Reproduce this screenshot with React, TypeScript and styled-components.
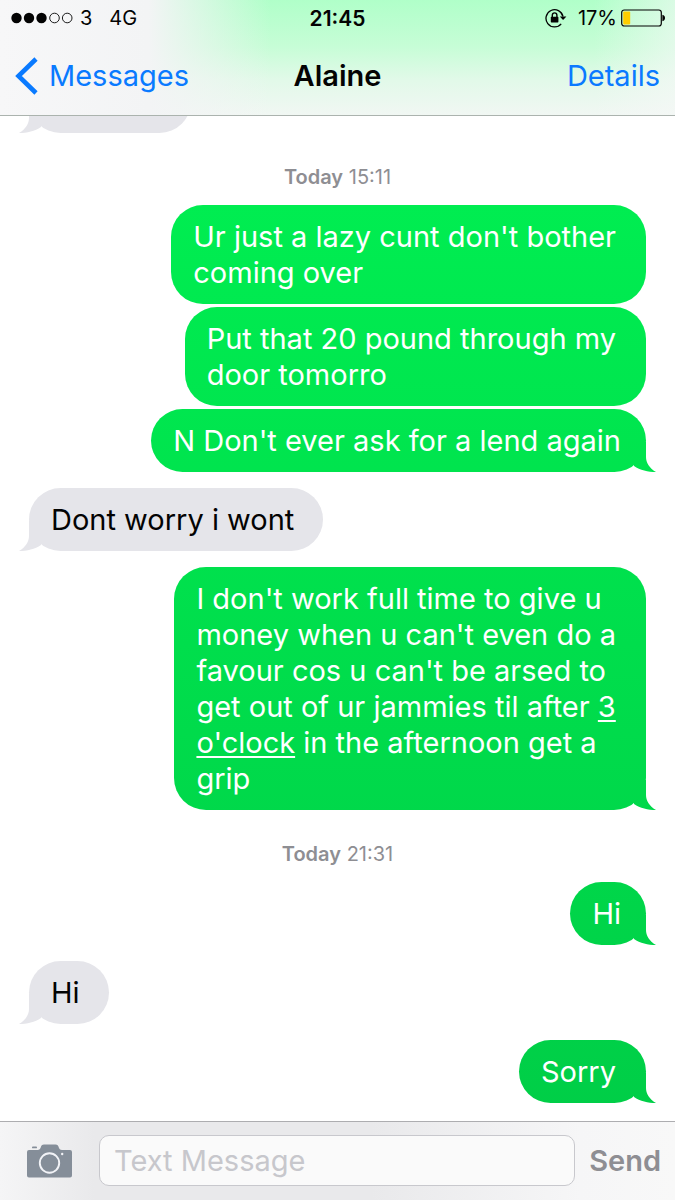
import React from "react";
import styled, { createGlobalStyle, css } from "styled-components";

const GlobalStyle = createGlobalStyle`
  * {
    box-sizing: border-box;
  }
  body {
    margin: 0;
    background: #fff;
    font-family: Inter, Roboto, "Liberation Sans", sans-serif;
    color: #030303;
  }
`;

const Screen = styled.div`
  display: flex;
  flex-direction: column;
  height: 100vh;
`;

const Header = styled.header`
  flex: none;
  border-bottom: 1px solid #abb3ae;
  background:
    linear-gradient(to right, #f7f7f8 0%, #f3f4f5 22%, rgba(245, 247, 246, 0) 40%),
    linear-gradient(to left, rgba(246, 248, 247, 0.6), rgba(246, 248, 247, 0) 12%),
    linear-gradient(to bottom, #b0ffc9 0%, #c6fdd6 40%, #e2f9e9 70%, #f1f7f3 100%);
`;

const StatusBar = styled.div`
  display: grid;
  grid-template-columns: 1fr auto 1fr;
  align-items: center;
  height: 36px;
  padding: 0 10px;
  font-size: 20px;
`;

const Carrier = styled.div`
  display: flex;
  align-items: center;

  span {
    margin-left: 6px;
  }
  span + span {
    margin-left: 17px;
  }
`;

const Clock = styled.time`
  font-size: 21px;
  font-weight: 600;
`;

const Power = styled.div`
  display: flex;
  align-items: center;
  justify-content: flex-end;

  span {
    margin: 0 4px 0 11px;
  }
`;

const NavBar = styled.nav`
  display: grid;
  grid-template-columns: 1fr auto 1fr;
  align-items: center;
  height: 79px;
  padding: 0 15px;
`;

const NavLink = styled.a<{ $end?: boolean }>`
  display: flex;
  align-items: center;
  gap: 11px;
  justify-self: ${({ $end }) => ($end ? "end" : "start")};
  font-size: 29px;
  color: #0a7aff;
  text-decoration: none;
`;

const Title = styled.h1`
  margin: 0;
  font-size: 29px;
  font-weight: 600;
`;

/* The newest message stays at the bottom, older ones go under the header */
const Thread = styled.main`
  flex: 1;
  min-height: 0;
  display: flex;
  flex-direction: column;
  justify-content: flex-end;
  overflow: hidden;
  padding: 0 29px 18px;
`;

const DateText = styled.p`
  flex: none;
  margin: 32px 0 0;
  text-align: center;
  font-size: 20px;
  line-height: 24px;
  color: #8e8e93;

  b {
    font-weight: 600;
  }
`;

const sentStyle = css<{ $wide?: boolean }>`
  align-self: flex-end;
  padding: 14px ${({ $wide }) => ($wide ? "30px" : "25px")} 13px 22px;
  color: #fff;
  background: linear-gradient(#00f453, #00cb46) fixed;
`;

const receivedStyle = css`
  align-self: flex-start;
  padding: 14px 29px 13px 22px;
  background: #e5e5ea;
`;

const tailStyle = css<{ $sent?: boolean }>`
  &::after {
    content: "";
    position: absolute;
    bottom: 0;
    width: 30px;
    height: 30px;
    ${({ $sent }) =>
      $sent
        ? css`
            right: -10px;
            background: linear-gradient(#00f453, #00cb46) fixed;
            clip-path: path("M20 0V15C20 20 23 26 30 30C22 30 14 28 8 24V0Z");
          `
        : css`
            left: -10px;
            background: #e5e5ea;
            clip-path: path("M10 0V15C10 20 7 26 0 30C8 30 16 28 22 24V0Z");
          `}
  }
`;

const Bubble = styled.div<{
  $sent?: boolean;
  $tail?: boolean;
  $joined?: boolean;
  $wide?: boolean;
}>`
  position: relative;
  flex: none;
  max-width: 100%;
  margin-top: ${({ $joined }) => ($joined ? "3px" : "16px")};
  border-radius: 32px;
  font-size: 29px;
  line-height: 36px;
  white-space: pre-line;
  ${({ $sent }) => ($sent ? sentStyle : receivedStyle)}
  ${({ $tail }) => $tail && tailStyle}

  a {
    color: inherit;
    text-underline-offset: 3px;
    text-decoration-thickness: 2px;
  }
`;

/* Scrolled out of view, only its bottom edge shows */
const OlderBubble = styled(Bubble)`
  width: 162px;
  height: 63px;
`;

const Composer = styled.form`
  flex: none;
  display: flex;
  align-items: center;
  padding: 13px 14px 14px 27px;
  border-top: 1px solid #adadb0;
  background: linear-gradient(to right, #f5f5f6 0%, #e9e9eb 14%, #e9e9eb 55%, #f6f6f7 86%, #f8f8f8 100%);
`;

const IconButton = styled.button`
  display: flex;
  padding: 0;
  border: none;
  background: none;
  color: #858e99;
`;

const TextInput = styled.input`
  flex: 1;
  min-width: 0;
  height: 51px;
  margin: 0 14px 0 27px;
  padding: 0 14px;
  border: 1px solid #c8c8cd;
  border-radius: 10px;
  background: #fafafa;
  font-family: inherit;
  font-size: 29px;

  &::placeholder {
    color: #c7c7cc;
    opacity: 1;
  }
`;

const SendButton = styled.button`
  padding: 0;
  border: none;
  background: none;
  font-family: inherit;
  font-size: 29px;
  font-weight: 600;
  color: #8e8e93;
`;

const SignalDots = () => (
  <svg width="64" height="12" viewBox="0 0 64 12" aria-label="Signal 3 of 5">
    {[6.5, 19, 31.5].map((x) => (
      <circle key={x} cx={x} cy="6" r="5.2" fill="#030303" />
    ))}
    {[44.5, 57.2].map((x) => (
      <circle key={x} cx={x} cy="6" r="4.8" fill="none" stroke="#030303" strokeWidth="0.9" />
    ))}
  </svg>
);

const RotationLock = () => (
  <svg width="22" height="20" viewBox="0 0 22 20" aria-label="Rotation locked">
    <path d="M16.2 15.8A8.6 8.6 0 1 1 18 8.5" fill="none" stroke="#030303" strokeWidth="1.3" />
    <path d="M14.8 8.4H21.4L18.1 12Z" fill="#030303" />
    <rect x="5.8" y="8.8" width="7.6" height="5.6" rx="0.6" fill="#030303" />
    <path d="M7.3 9V7.2a2.3 2.3 0 0 1 4.6 0V9" fill="none" stroke="#030303" strokeWidth="1.4" />
  </svg>
);

const Battery = () => (
  <svg width="44" height="18" viewBox="0 0 44 18" aria-label="Battery">
    <rect x="0.7" y="1" width="39.6" height="16" rx="2.5" fill="none" stroke="#030303" strokeWidth="1.2" />
    <rect x="2.2" y="2.6" width="7" height="12.8" rx="0.8" fill="#fc0" />
    <path d="M41.4 5.8C43.2 6.3 44 7.4 44 9s-.8 2.7-2.6 3.2Z" fill="#030303" />
  </svg>
);

const BackArrow = () => (
  <svg width="23" height="38" viewBox="0 0 23 38" aria-hidden="true">
    <path d="M21 2L3.5 19L21 36" fill="none" stroke="#0a7aff" strokeWidth="4.6" />
  </svg>
);

const Camera = () => (
  <svg width="45" height="34" viewBox="0 0 45 34" aria-hidden="true">
    <path
      d="M2 6H10.5C12.5 6 13.3 4.8 13.8 3.2C14.3 1.4 15 .5 17 .5H28.5C30.5 .5 31.2 1.4 31.7 3.2C32.2 4.8 33 6 35 6H43Q45 6 45 8V31.5Q45 33.5 43 33.5H2Q0 33.5 0 31.5V8Q0 6 2 6Z"
      fill="currentColor"
    />
    <rect x="5" y="2.4" width="5" height="1.9" rx="0.9" fill="currentColor" />
    <circle cx="22.5" cy="19" r="9.7" fill="none" stroke="#f2f3f7" strokeWidth="1.9" />
    <circle cx="35.2" cy="10" r="1.2" fill="#f2f3f7" />
  </svg>
);

const App = () => {
  return (
    <Screen>
      <GlobalStyle />
      <Header>
        <StatusBar>
          <Carrier>
            <SignalDots />
            <span>3</span>
            <span>4G</span>
          </Carrier>
          <Clock>21:45</Clock>
          <Power>
            <RotationLock />
            <span>17%</span>
            <Battery />
          </Power>
        </StatusBar>
        <NavBar>
          <NavLink href="#messages">
            <BackArrow />
            Messages
          </NavLink>
          <Title>Alaine</Title>
          <NavLink href="#details" $end>
            Details
          </NavLink>
        </NavBar>
      </Header>

      <Thread>
        <OlderBubble $tail />
        <DateText>
          <b>Today</b> 15:11
        </DateText>
        <Bubble $sent $wide>
          {"Ur just a lazy cunt don't bother\ncoming over"}
        </Bubble>
        <Bubble $sent $joined $wide>
          {"Put that 20 pound through my\ndoor tomorro"}
        </Bubble>
        <Bubble $sent $joined $tail>
          N Don't ever ask for a lend again
        </Bubble>
        <Bubble $tail>Dont worry i wont</Bubble>
        <Bubble $sent $tail $wide>
          {
            "I don't work full time to give u\nmoney when u can't even do a\nfavour cos u can't be arsed to\nget out of ur jammies til after "
          }
          <a href="#time">{"3\no'clock"}</a>
          {" in the afternoon get a\ngrip"}
        </Bubble>
        <DateText>
          <b>Today</b> 21:31
        </DateText>
        <Bubble $sent $tail>
          Hi
        </Bubble>
        <Bubble $tail>Hi</Bubble>
        <Bubble $sent $tail $wide>
          Sorry
        </Bubble>
      </Thread>

      <Composer onSubmit={(e) => e.preventDefault()}>
        <IconButton type="button" aria-label="Camera">
          <Camera />
        </IconButton>
        <TextInput type="text" aria-label="Text Message" placeholder="Text Message" />
        <SendButton type="submit">Send</SendButton>
      </Composer>
    </Screen>
  );
};

export default App;
